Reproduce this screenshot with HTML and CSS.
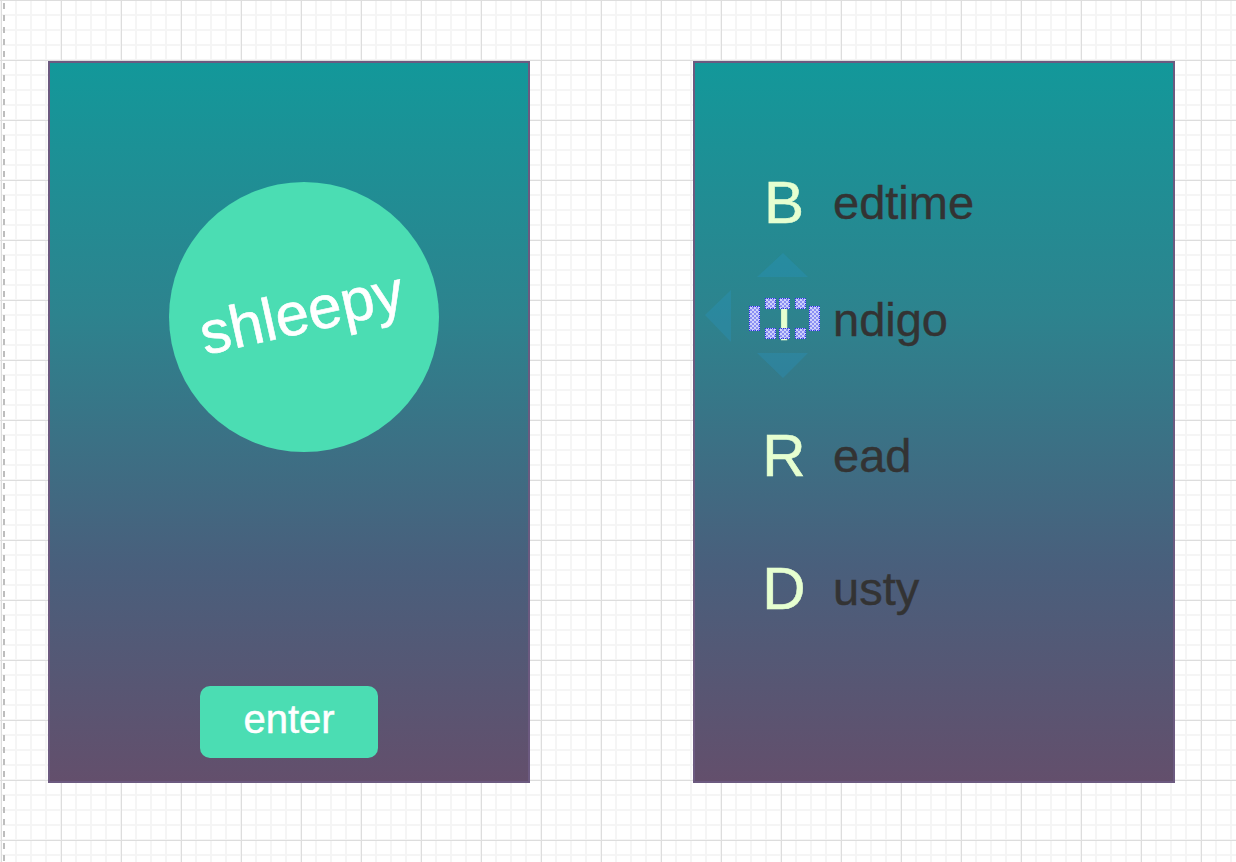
FILE: index.html
```html
<!DOCTYPE html>
<html lang="en">
<head>
<meta charset="utf-8">
<title>shleepy</title>
<link rel="stylesheet" href="styles.css">
</head>
<body>
<div class="guide"></div>
<main class="board">
  <section class="card card-welcome">
    <div class="logo"><span class="logo-text">shleepy</span></div>
    <button class="enter">enter</button>
  </section>
  <section class="card card-menu">
    <div class="row">
      <span class="letter">B</span><span class="word">edtime</span>
    </div>
    <div class="row">
      <span class="letter selected">I
        <svg class="arrows" width="115" height="130" viewBox="0 0 115 130">
          <polygon points="55,27 106,27 81,3"/>
          <polygon points="55,103 106,103 81,128"/>
          <polygon points="3,65 29,40 29,92"/>
        </svg>
        <i class="handle h-left"></i>
        <i class="handle h-right"></i>
        <i class="handle h-t1"></i>
        <i class="handle h-t2"></i>
        <i class="handle h-t3"></i>
        <i class="handle h-b1"></i>
        <i class="handle h-b2"></i>
        <i class="handle h-b3"></i>
      </span><span class="word">ndigo</span>
    </div>
    <div class="row">
      <span class="letter">R</span><span class="word">ead</span>
    </div>
    <div class="row">
      <span class="letter">D</span><span class="word">usty</span>
    </div>
  </section>
</main>
</body>
</html>
```
FILE: styles.css
```css
html, body {
  margin: 0;
  padding: 0;
  height: 100%;
}
body {
  font-family: "Liberation Sans", Arial, sans-serif;
  background-color: #ffffff;
  background-image:
    linear-gradient(to right, #dddddd 1px, transparent 1px),
    linear-gradient(to bottom, #dddddd 1px, transparent 1px),
    linear-gradient(to right, #f5f5f5 2px, transparent 2px),
    linear-gradient(to bottom, #f5f5f5 2px, transparent 2px);
  background-size: 60px 60px, 60px 60px, 15px 15px, 15px 15px;
  background-position: 1px 0, 0 0, 0 0, 0 14px;
  overflow: hidden;
}
.guide {
  position: fixed;
  left: 3px;
  top: 0;
  width: 2px;
  height: 100%;
  background: repeating-linear-gradient(to bottom, #bdbdbd 0 6px, transparent 6px 12px);
  background-position: 0 3px;
}
.board {
  display: flex;
  gap: 163px;
  padding: 61px 0 0 48px;
}
.card {
  box-sizing: border-box;
  width: 482px;
  height: 722px;
  border: 2px solid #6c5a80;
  background: linear-gradient(to bottom, #13989a 0%, #2d838e 35%, #495f7c 70%, #634f6c 100%);
  display: flex;
  flex-direction: column;
}
.logo {
  width: 270px;
  height: 270px;
  border-radius: 50%;
  background: #4bddb3;
  margin: 119px 0 0 119px;
  display: flex;
  align-items: center;
  justify-content: center;
}
.logo-text {
  color: #ffffff;
  font-size: 60px;
  -webkit-text-stroke: 0.6px #ffffff;
  transform: translate(-3px, -5px) rotate(-12.5deg);
}
.enter {
  margin-top: auto;
  margin-bottom: 23px;
  align-self: center;
  width: 178px;
  height: 72px;
  border: none;
  border-radius: 10px;
  background: #4bddb3;
  color: #ffffff;
  font-family: "Liberation Sans", Arial, sans-serif;
  font-size: 40px;
  -webkit-text-stroke: 0.5px #ffffff;
  padding: 0 0 5px 0;
}
.card-menu {
  padding: 105px 0 0 67px;
}
.row {
  display: flex;
  align-items: center;
}
.row:nth-child(2) { margin-top: 48px; }
.row:nth-child(3) { margin-top: 67px; }
.row:nth-child(4) { margin-top: 64px; }
.letter {
  position: relative;
  width: 44px;
  text-align: center;
  font-size: 60px;
  color: #e6ffd0;
  -webkit-text-stroke: 0.6px #e6ffd0;
}
.word {
  margin-left: 27px;
  font-size: 47px;
  color: #333333;
  -webkit-text-stroke: 0.4px #333333;
}
.arrows {
  position: absolute;
  left: -60px;
  top: -35px;
  fill: rgba(40, 150, 200, 0.28);
}
.handle {
  position: absolute;
  box-sizing: border-box;
  width: 11px;
  height: 11px;
  border: 1px dotted #2c36e0;
  background: conic-gradient(#8b90f4 25%, #cfd2fa 0 50%, #8b90f4 0 75%, #cfd2fa 0) 0 0 / 4px 4px;
}
.h-left { left: -13px; top: 21px; height: 25px; }
.h-right { left: 47px; top: 21px; height: 25px; }
.h-t1 { left: 3px; top: 13px; }
.h-t2 { left: 17px; top: 13px; }
.h-t3 { left: 33px; top: 13px; }
.h-b1 { left: 3px; top: 43px; }
.h-b2 { left: 17px; top: 43px; }
.h-b3 { left: 33px; top: 43px; }
```
